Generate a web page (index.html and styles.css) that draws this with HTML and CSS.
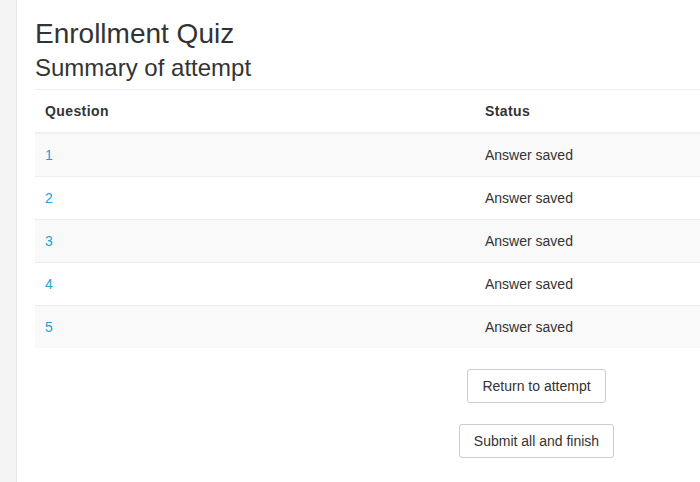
FILE: index.html
```html
<!DOCTYPE html>
<html>
<head>
<meta charset="utf-8">
<link rel="stylesheet" href="styles.css">
</head>
<body>
<div class="page">
  <aside class="side"></aside>
  <main class="main">
    <h1 class="title">Enrollment Quiz</h1>
    <h2 class="subtitle">Summary of attempt</h2>
    <table class="summary">
      <thead>
        <tr><th class="col-q">Question</th><th>Status</th></tr>
      </thead>
      <tbody>
        <tr><td class="col-q"><a href="#">1</a></td><td>Answer saved</td></tr>
        <tr><td class="col-q"><a href="#">2</a></td><td>Answer saved</td></tr>
        <tr><td class="col-q"><a href="#">3</a></td><td>Answer saved</td></tr>
        <tr><td class="col-q"><a href="#">4</a></td><td>Answer saved</td></tr>
        <tr><td class="col-q"><a href="#">5</a></td><td>Answer saved</td></tr>
      </tbody>
    </table>
    <div class="actions">
      <button class="btn">Return to attempt</button>
      <button class="btn">Submit all and finish</button>
    </div>
  </main>
</div>
</body>
</html>
```
FILE: styles.css
```css
html, body {
  margin: 0;
  padding: 0;
  background: #fff;
  overflow: hidden;
}
body {
  font-family: "Liberation Sans", Arial, sans-serif;
  color: #333;
  font-size: 14px;
}
.page {
  display: flex;
  min-height: 482px;
}
.side {
  width: 16px;
  flex: none;
  background: #f4f4f4;
  border-right: 1px solid #e6e6e6;
}
.main {
  flex: none;
  width: 1003px;
  padding: 15px 0 0 18px;
}
.title {
  margin: 0;
  font-size: 28px;
  font-weight: normal;
  line-height: 37px;
  color: #333;
}
.subtitle {
  margin: 0 0 5px;
  font-size: 24px;
  font-weight: normal;
  line-height: 32px;
  color: #333;
}
.summary {
  width: 100%;
  border-collapse: collapse;
  font-size: 14px;
}
.summary th,
.summary td {
  text-align: left;
  padding: 0 10px;
  height: 42px;
  border-top: 1px solid #eee;
  vertical-align: middle;
}
.summary th {
  font-size: 14px;
  font-weight: bold;
  letter-spacing: 0.4px;
  border-bottom: 2px solid #eee;
  height: 42px;
}
.summary .col-q {
  width: 420px;
}
.summary tbody tr:nth-child(odd) {
  background: #f9f9f9;
}
.summary a {
  color: #1ba2d6;
  text-decoration: none;
}
.actions {
  display: flex;
  flex-direction: column;
  align-items: center;
  gap: 21px;
  padding-top: 21px;
}
.btn {
  font-family: "Liberation Sans", Arial, sans-serif;
  font-size: 14px;
  color: #333;
  background: #fff;
  border: 1px solid #ccc;
  border-radius: 3px;
  padding: 0 14px;
  height: 34px;
  line-height: 32px;
}
```
